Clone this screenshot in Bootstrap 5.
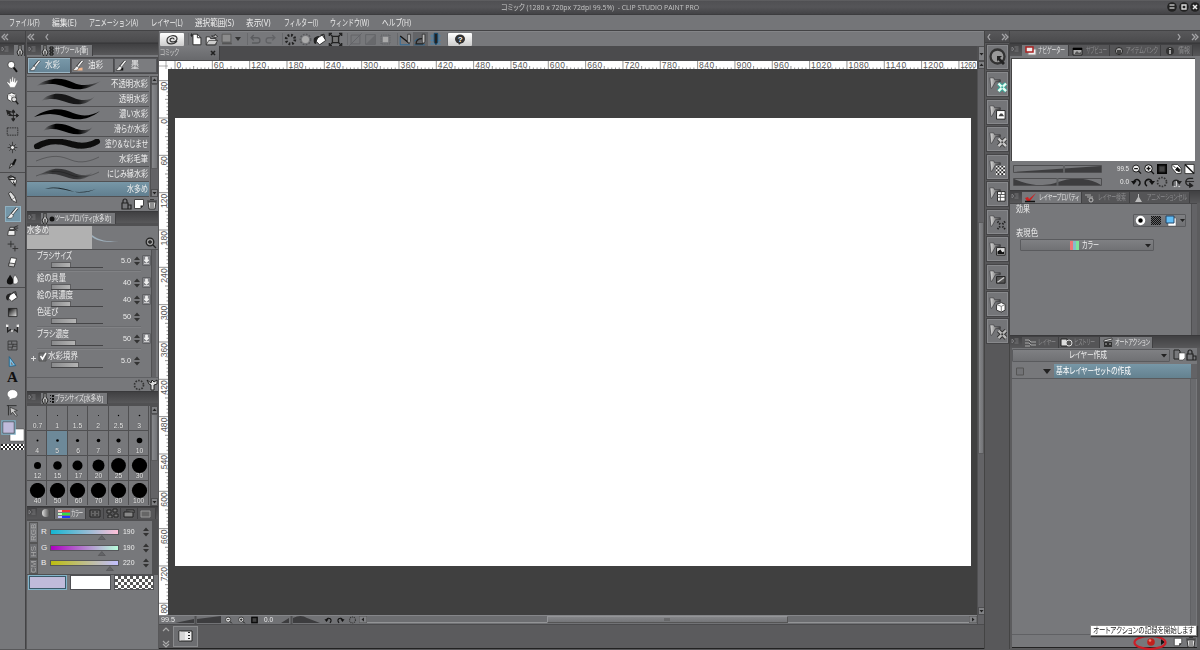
<!DOCTYPE html>
<html lang="ja">
<head>
<meta charset="UTF-8">
<meta name="viewport" content="width=device-width, initial-scale=1.0">
<title>コミック - CLIP STUDIO PAINT PRO</title>
<link href="https://cdn.jsdelivr.net/npm/bootstrap@5.3.0/dist/css/bootstrap.min.css" rel="stylesheet">
<style>
    :root { --panel: #77787b; --edge: #434345; }
    body { width: 1200px; height: 650px; overflow: hidden; background: #58585a; color: #ededed; line-height: 1;
        font-family: "Liberation Sans", "Noto Sans CJK JP", sans-serif; font-size: 8px; font-feature-settings: "palt"; }
    svg { display: block; flex: none; }
    .ic { width: 15px; height: 15px; }
    .ic12 { width: 12px; height: 12px; }
    .ic10 { width: 10px; height: 10px; }
    [data-w] { display: inline-block; white-space: nowrap; flex: none; }
    .fit-in { display: inline-block; white-space: inherit; transform-origin: 0 50%; }
    .titlebar { height: 15px; background: linear-gradient(#6a6a6c 0, #505053 1px, #555558 50%, #434346); border-bottom: 1px solid #3c3c3e; color: #c4c4c4; position: relative; font-family: "Open Sans", "Noto Sans CJK JP", sans-serif; }
    .win-btns { position: absolute; right: 0; top: 2px; gap: 1.5px; }
    .menubar { height: 16px; background: #747578; border-bottom: 1px solid var(--edge); padding: 0 0 0 9px; gap: 12.6px; font: 9px/1 "Open Sans", "Noto Sans CJK JP", sans-serif; }
    .work { height: 618px; }
    .dock-head { height: 12px; background: linear-gradient(#58585a, #4b4b4d); border-bottom: 1px solid #404042; }
    .chev { width: 8px; height: 8px; }
    .tabs { height: 12px; background: linear-gradient(#404042, #58585a); font-size: 7.5px; border-top: 1px solid #39393b; padding-top: 1px; }
    .tabs > .ptab { height: 11px; background: #555557; border-right: 1px solid #404042; color: #8b8b8d; overflow: hidden; }
    .tabs > .ptab.on { background: var(--panel); color: #e4e4e4; }
    .grip-ic { width: 8px; margin: 0 1px; }
    .tool-col { width: 26px; border-right: 1px solid var(--edge); background: var(--panel); }
    .left-col { width: 131px; margin-left: 1px; background: var(--panel); }
    .center-col { width: 825px; margin-left: 1px; }
    .strip-col { width: 25px; border-left: 1px solid #444; background: #58585a; }
    .right-col { width: 191px; border-left: 1px solid #444; background: #5c5c5e; }
    .tl { height: 16.3px; width: 16px; display: flex; align-items: center; justify-content: center; }
    .tl.on { background: #7496a8; outline: 1px solid #8fb0c0; outline-offset: -1px; }
    .rule { height: 1px; background: #4d4d4f; }
    .sbtn { width: 43.4px; height: 15px; border: 1px solid #55565a; outline: 1px solid #4b4b4d; background: #7b7c7f; font-size: 9px; }
    .sbtn.on { background: linear-gradient(#7898a8, #668496); border-color: #9ab4c2; }
    .brush-row { height: 15px; border-bottom: 1px solid #515153; font-size: 9px; padding: 0 1px 0 6px; }
    .brush-row.on { background: linear-gradient(#7797a7, #617f90); }
    .vbar { width: 8px; background: #636366; border-left: 1px solid #505052; }
    .arrow-box { width: 7px; height: 8px; background: #808184; border: 1px solid #4f4f51; }
    .arrow-box svg { width: 5px; height: 6px; }
    .thumb { background: linear-gradient(90deg, #87888b, #737477); border: 1px solid #5b5b5d; }
    .prop { height: 17px; padding-left: 10px; }
    .prop .lab { height: 10px; font-size: 9px; }
    .prop .trk { width: 52px; height: 6px; margin-left: 14px; border-bottom: 1px solid #454547; }
    .prop .trk div { height: 5px; background: linear-gradient(90deg, #8a8b8d, #b4b4b4); border: 1px solid #5d5d5f; border-bottom: 0; }
    .prop .val { width: 28px; text-align: right; padding-top: 5px; }
    .down-btn { width: 9px; height: 11px; border: 1px solid #5f6063; border-radius: 1px; background: #85868a; }
    .grp { border-top: 1px solid #6b6c6f; border-bottom: 1px solid #818285; height: 2px; margin: 1px 10px 2px 10px; }
    .sizes { display: grid; grid-template-columns: repeat(6, 20.4px); grid-auto-rows: 25px; height: 99px; overflow: hidden; }
    .sizes > div { border-right: 1px solid #505052; border-bottom: 1px solid #505052; height: 25px; position: relative; display: flex; justify-content: center; padding: 2px 0 0 1px; font-size: 8px; }
    .sizes > div.on { background: #6d8999; }
    .sizes .num { position: absolute; bottom: 0; transform: scaleX(.85); text-shadow: 0 0 1px #333; }
    .rgb-tabs { width: 9px; color: #aaa; font-size: 8px; }
    .rgb-tabs div { writing-mode: vertical-rl; transform: rotate(180deg); border: 1px solid #555; width: 9px; background: #6b6c6f; text-align: center; overflow: hidden; }
    .grad { width: 69px; height: 6px; border: 1px solid #56575a; }
    .g-r { background: linear-gradient(90deg, #14b6d2, #ffc0d8); }
    .g-g { background: linear-gradient(90deg, #ae00c0, #b8ffdc); }
    .g-b { background: linear-gradient(90deg, #bdbd10, #c2bfff); }
    .sw { height: 15px; border: 1px solid #4f5054; }
    .checker { background: repeating-conic-gradient(#555 0 25%, #fff 0 50%) 0 0 / 6px 6px; }
    .cmd { height: 15px; background: #77787b; border-top: 1px solid #838487; padding-left: 1px; }
    .cmd .whitebox { width: 24px; height: 13px; background: linear-gradient(#fff, #ccc); border-radius: 1px; }
    .cmd .gap5 { width: 5px; height: 12px; border-right: 1px solid #68696c; }
    .docbar { height: 15px; background: #4b4b4d; }
    .doc-tab { width: 61px; height: 14px; background: linear-gradient(#7a7b7e, #68696c); color: #ccc; font-size: 8px; padding: 0 3px 0 1px; border-right: 1px solid #3f3f41; }
    .canvas-bg { width: 809px; height: 546px; background: #404040; padding: 49px 0 0 6.5px; }
    .paper { width: 796px; height: 448px; background: #fff; }
    .ruler { background: #fff; overflow: hidden; }
    .ruler text { font: 8.5px "Liberation Sans"; fill: #555; }
    .hbar { height: 9px; background: #717275; font-size: 8px; border-top: 1px solid #858689; }
    .hbar .lite { background: #6d6e71; border-bottom: 1px solid #939496; height: 7px; }
    .foot { height: 25px; background: #5b5b5d; border-top: 1px solid #4c4c4e; border-bottom: 1px solid #222; }
    .foot-btn { width: 25px; height: 21px; border: 1px solid #8a8b8d; background: #6d6e71; }
    .qbtn { width: 21px; height: 24px; background: #747578; border: 1px solid #88898c; outline: 1px solid #454547; margin: 0 auto 3.45px; }
    .nav-view { width: 184px; height: 103px; background: #fff; border: 1px solid #444; border-width: 1px 0 0 1px; }
    .combo { border: 1px solid #5a5b5e; background: linear-gradient(#7f8083, #707174); border-radius: 1px; font-size: 9px; }
    .act-row { height: 15px; border-bottom: 1px solid #5a5b5e; }
    .act-name { width: 137px; height: 14px; background: linear-gradient(#7797a7, #64818f); font-size: 9px; padding-left: 2px; color: #fff; }
    .hint { position: absolute; left: 1090px; top: 625px; width: 107px; height: 11px; background: #fff; border: 1px solid #888; color: #222; font-size: 8.5px; padding-left: 2px; z-index: 4; box-shadow: 1px 1px 1px #333; }
    .ring { position: absolute; left: 1133px; top: 634px; z-index: 3; }
</style>
</head>
<body>
<svg width="0" height="0" class="position-absolute">
    <defs>
        <pattern id="chk" width="4" height="4" patternUnits="userSpaceOnUse"><path fill="#fff" d="M0 0h4v4H0z"/><path fill="#222" d="M0 0h2v2H0zM2 2h2v2H2z"/></pattern>
        <pattern id="dots" width="2" height="2" patternUnits="userSpaceOnUse"><path fill="#77787b" d="M0 0h2v2H0z"/><path fill="#111" d="M0 0h1.2v1.2H0zM1 1h1v1H1z"/></pattern>
        <linearGradient id="metal"><stop stop-color="#ddd"/><stop offset="1" stop-color="#444"/></linearGradient>
        <linearGradient id="stroke"><stop stop-opacity="0"/><stop offset=".25"/><stop offset=".7"/><stop offset="1" stop-opacity=".1"/></linearGradient>
        <filter id="soft" x="-10%" y="-30%" width="120%" height="160%"><feGaussianBlur stdDeviation=".7"/></filter>
    </defs>
    <symbol id="dbl-l" viewBox="0 0 8 8"><path d="M4 1L1 4l3 3M7 1L4 4l3 3" fill="none" stroke="#a5a5a7" stroke-width="1.3"/></symbol>
    <symbol id="dbl-r" viewBox="0 0 8 8"><path d="M1 1l3 3-3 3M4 1l3 3-3 3" fill="none" stroke="#a5a5a7" stroke-width="1.3"/></symbol>
    <symbol id="one-l" viewBox="0 0 8 8"><path d="M5 1L3 4l2 3" fill="none" stroke="#a5a5a7" stroke-width="1.3"/></symbol>
    <symbol id="one-r" viewBox="0 0 8 8"><path d="M3 1l2 3-2 3" fill="none" stroke="#a5a5a7" stroke-width="1.3"/></symbol>
    <symbol id="grip" viewBox="0 0 8 8"><path d="M1 1.500l2 2-2 2zM3.500 1.500h4M4.500 3.500h3M3.500 5.500h4" stroke="#8a8a8c" stroke-width=".7" fill="none"/></symbol>
    <symbol id="pen-tab" viewBox="0 0 8 12"><path d="M3 0h2v4l2 3-2 5H3L1 7l2-3z" fill="#bbb" stroke="#222"/><path d="M4 6v5" stroke="#111"/></symbol>
    <symbol id="up" viewBox="0 0 5 6"><path d="M.5 4h4L2.500 1.500z" fill="#222"/></symbol>
    <symbol id="dn" viewBox="0 0 5 6"><path d="M.5 2h4L2.500 4.500z" fill="#222"/></symbol>
    <symbol id="spin" viewBox="0 0 6 10"><path d="M0 4h6L3 .5zM0 6h6L3 9.500z" fill="#333"/></symbol>
    <symbol id="magnify" viewBox="0 0 16 16"><circle cx="6.500" cy="6" r="4.300" fill="#fff" stroke="#333"/><path d="M9.500 9.500l4 5" stroke="#111" stroke-width="2.400"/></symbol>
    <symbol id="hand" viewBox="0 0 16 16"><path d="M5 14C4 11 1 9 1 7.500l1-.5 2.500 2V3.500L6 3l.7 4L7.500 1H9l.2 6 1.300-5 1.300.5L11.300 8 13.500 5l1.200.8C13 9 12.500 12 10.500 14z" fill="#fff" stroke="#555" stroke-width=".5"/></symbol>
    <symbol id="objsel" viewBox="0 0 16 16"><path d="M2 3l5-2 5 2v6l-5 3-5-3z" fill="#fff" stroke="#333"/><path d="M2 3l5 2 5-2M7 5v7" stroke="#aaa" fill="none"/><circle cx="10" cy="9" r="3" fill="#ddd" stroke="#222"/><path d="M12 11l3 4" stroke="#222" stroke-width="2"/></symbol>
    <symbol id="move" viewBox="0 0 16 16"><path d="M9 2v12M3 8h12M9 1L7 4h4zM9 15l-2-3h4zM15.500 8L13 6v4z" fill="#222" stroke="#222" stroke-width="1.200"/><path d="M0 1l7 2-2 2 3 3-2 1-3-3-1 2z" fill="#222"/></symbol>
    <symbol id="marquee" viewBox="0 0 16 16"><path d="M1.500 3.500h13v9h-13z" fill="none" stroke="#222" stroke-dasharray="2 1"/></symbol>
    <symbol id="wand" viewBox="0 0 16 16"><path d="M8 1v14M2 8h12M4 4l8 8M12 4l-8 8" stroke="#333"/><circle cx="8" cy="8" r="2.500" fill="#eee" stroke="#222"/></symbol>
    <symbol id="dropper" viewBox="0 0 16 16"><path d="M4 14l2-6 3 2z" fill="#bbb" stroke="#222"/><path d="M7 9l4-7 2 1-3 7z" fill="#111"/></symbol>
    <symbol id="nib" viewBox="0 0 16 16"><path d="M3 4l6-2 4 5-2 7-5-6z" fill="#eee" stroke="#222"/><path d="M2 3l4-2 6 3M3 5l8 1M9 8l2 5" stroke="#222" fill="none" stroke-width="1.500"/></symbol>
    <symbol id="pencil" viewBox="0 0 16 16"><path d="M3 3l3-2 5 6 2 7-6-3z" fill="#ddd" stroke="#222"/><path d="M7 11l4-3 2 6z" fill="#fff" stroke="#222" stroke-width=".6"/></symbol>
    <symbol id="brush" viewBox="0 0 16 16"><path d="M14 1L7 9" stroke="#222" stroke-width="3.500"/><path d="M14 1L7.500 9" stroke="#f4f4f4" stroke-width="2"/><path d="M7 8c-3 0-2 4-6 5 3 2 8 1 8-3z" fill="#eee" stroke="#222" stroke-width=".7"/></symbol>
    <symbol id="air" viewBox="0 0 16 16"><path d="M3 8h8v6H2z" fill="#eee" stroke="#333"/><path d="M4 7l1-3h5v3zM10 4l5-2M10 5h5M10 6l4 2" fill="#ccc" stroke="#222"/></symbol>
    <symbol id="sparkle" viewBox="0 0 16 16"><path d="M6 1v8M2 5h8M11 7v7M8 10.500h7" stroke="#333" stroke-width="1.200"/></symbol>
    <symbol id="eraser" viewBox="0 0 16 16"><path d="M6 2l7 1-3 10-7-1z" fill="#fff" stroke="#333"/><path d="M4 8.500l7 1-1 4-7-1z" fill="#ccc" stroke="#333"/></symbol>
    <symbol id="blend" viewBox="0 0 16 16"><path d="M5 2c3 4 4 6 4 8a4 4 0 0 1-8 0c0-2 2-4 4-8z" fill="#111"/><path d="M11 2c3 4 4 6 4 8a4 4 0 0 1-6 3V6z" fill="#f4f4f4" stroke="#333" stroke-width=".6"/></symbol>
    <symbol id="bucket" viewBox="0 0 16 16"><path d="M5 6l5-3 4 6-7 5-4-4z" fill="#fff" stroke="#222"/><path d="M0 9c0-3 3-5 7-5L4 7l-1 6C1 13 0 11 0 9z" fill="#222"/><path d="M8 3l4-1 1 5" fill="none" stroke="#222"/></symbol>
    <symbol id="gradient" viewBox="0 0 16 16"><linearGradient id="gg" x2="1" y2="1"><stop stop-color="#000"/><stop offset="1" stop-color="#eee"/></linearGradient><path d="M3 3h10.500v10H3z" fill="url(#gg)" stroke="#222"/></symbol>
    <symbol id="contour" viewBox="0 0 16 16"><path d="M2 3v9l4-3M14 3v9l-4-3M5 10q3 3 6 0" stroke="#222" fill="none" stroke-width="1.500"/><path d="M0 3h3v3H0zM13 3h3v3h-3zM6 10h3v2H6z" fill="#eee"/></symbol>
    <symbol id="frame" viewBox="0 0 16 16"><path d="M2.500 2.500h11v11h-11zM2.500 6.500h11M7 3v3M9 6l-2 7M3 10h5M8 9h5" stroke="#333" fill="none"/></symbol>
    <symbol id="figure" viewBox="0 0 16 16"><path d="M4 2l8 11-8 1z" fill="#7fc2e8" stroke="#185a82"/><path d="M6 8v4h3z" fill="#77787b"/></symbol>
    <symbol id="balloon" viewBox="0 0 16 16"><ellipse cx="8" cy="7.500" rx="6.500" ry="5.500" fill="#fff" stroke="#444" stroke-width=".5"/><path d="M5 11l-1 3 5-2z" fill="#fff"/></symbol>
    <symbol id="fixline" viewBox="0 0 16 16"><path d="M1 2h12M3 2v12" stroke="#222"/><path d="M5 4l9 4-4 1 4 5-2 1-4-5-2 3z" stroke="#222" fill="#ccc" stroke-width=".8"/></symbol>
    <symbol id="lock" viewBox="0 0 12 12"><path d="M2 5h6v6H2zM3 5V3a2 2 0 0 1 4 0v2M8 7h3v4H8" fill="none" stroke="#222" stroke-width="1.200"/></symbol>
    <symbol id="newdoc" viewBox="0 0 12 12"><path d="M1.500 1.500h9v6l-3 3h-6z" fill="#fff" stroke="#444"/><path d="M10.500 7.500h-3v3z" fill="#222"/></symbol>
    <symbol id="trash" viewBox="0 0 12 12"><path d="M2 4h8l-1 7H3z" fill="#ddd" stroke="#333"/><path d="M1 3h10M4 1.500h4M5 5v5M7 5v5" stroke="#333" stroke-width=".9"/></symbol>
    <symbol id="spinner" viewBox="0 0 12 12"><circle cx="6" cy="6" r="4.500" fill="none" stroke="#333" stroke-width="1.700" stroke-dasharray="1.600 1.230"/></symbol>
    <symbol id="wrench" viewBox="0 0 12 12"><path d="M1 1l2 4 2 1v5h3V6l3-1V1L8 3 6 1 5 4z" fill="#ddd" stroke="#222"/></symbol>
    <symbol id="zout" viewBox="0 0 12 12"><circle cx="5.500" cy="5.500" r="3.800" fill="#eee" stroke="#111"/><path d="M3.500 5.500h4M8 8l3 3" stroke="#111" stroke-width="1.300"/></symbol>
    <symbol id="zin" viewBox="0 0 12 12"><circle cx="5.500" cy="5.500" r="3.800" fill="#eee" stroke="#111"/><path d="M3.500 5.500h4M5.500 3.500v4M8 8l3 3" stroke="#111" stroke-width="1.300"/></symbol>
    <symbol id="fit" viewBox="0 0 12 12"><path d="M1 1h10v10H1z" fill="#050505"/><path d="M3 3h6v6H3z" fill="#444" stroke="#222"/></symbol>
    <symbol id="rotl" viewBox="0 0 12 12"><path d="M3 6a3.500 3.500 0 1 1 5 4" fill="none" stroke="#111" stroke-width="1.600"/><path d="M0 5h6L3 9z" fill="#111"/></symbol>
    <symbol id="rotr" viewBox="0 0 12 12"><path d="M9 6a3.500 3.500 0 1 0-5 4" fill="none" stroke="#111" stroke-width="1.600"/><path d="M12 5H6l3 4z" fill="#111"/></symbol>
    <symbol id="flipa" viewBox="0 0 12 12"><path d="M1 1h6l4 4v6H6L1 5z" fill="#fff" stroke="#333"/><path d="M2 2l3 3M5 7l2-3 3 3-1 2z" fill="#111" stroke="#111"/></symbol>
    <symbol id="flipb" viewBox="0 0 12 12"><path d="M1 1h10v10H1z" fill="#fff" stroke="#333"/><path d="M1 1l10 10" stroke="#111" stroke-width="1.500"/></symbol>
    <symbol id="fliph" viewBox="0 0 12 12"><path d="M2 10V6a4 4 0 0 1 7 0" fill="none" stroke="#222" stroke-width="1.500"/><path d="M6 5h6L9 9z" fill="#222"/><path d="M6 5v6M3 11h2M8 11h2" stroke="#ddd"/></symbol>
    <symbol id="flipv" viewBox="0 0 12 12"><path d="M10 2H6a3.500 3.500 0 0 0 0 8h1" fill="none" stroke="#222" stroke-width="1.500"/><path d="M6 7v5l4-2zM2 5.500h9" fill="#222" stroke="#222"/></symbol>
    <symbol id="folder" viewBox="0 0 21 24"><path d="M2 5h4l1 2h6v2H8l-4 7H3z" fill="url(#metal)" stroke="#3a3a3c" stroke-width=".7"/></symbol>
</svg>

<div class="titlebar d-flex justify-content-center align-items-center">
    <span data-w="198" style="white-space: pre">コミック (1280 x 720px 72dpi 99.5%)  - CLIP STUDIO PAINT PRO</span>
    <div class="win-btns d-flex">
        <svg class="ic10" viewBox="0 0 10 10"><circle cx="5" cy="5" r="4.800" fill="#222"/><path d="M2.500 3h5M2.500 6h5" stroke="#bbb" stroke-width="1.300"/></svg>
        <svg class="ic10" viewBox="0 0 10 10"><circle cx="5" cy="5" r="4.800" fill="#222"/><path d="M3 3h4v4H3z" fill="none" stroke="#ddd" stroke-width="1.300"/></svg>
        <svg class="ic10" viewBox="0 0 10 10"><circle cx="5" cy="5" r="4.800" fill="#222"/><path d="M3 3l4 4M7 3L3 7" stroke="#eee" stroke-width="1.500"/></svg>
    </div>
</div>
<nav class="menubar d-flex align-items-center">
    <span data-w="30.500">ファイル(F)</span><span data-w="24.500">編集(E)</span><span data-w="49">アニメーション(A)</span><span data-w="31.500">レイヤー(L)</span><span data-w="39">選択範囲(S)</span><span data-w="24.500">表示(V)</span><span data-w="34">フィルター(I)</span><span data-w="39">ウィンドウ(W)</span><span data-w="29">ヘルプ(H)</span>
</nav>

<div class="work d-flex">
    <!-- ツール -->
    <aside class="tool-col d-flex flex-column">
        <div class="dock-head d-flex align-items-center"><svg class="chev" style="margin-left:1px"><use href="#dbl-l"/></svg></div>
        <div class="tabs d-flex"><svg class="grip-ic" height="9"><use href="#grip"/></svg><div class="ptab on ms-1" style="padding:0 2px"><svg width="8" height="12"><use href="#pen-tab"/></svg></div></div>
        <div id="tools" class="d-flex flex-column align-items-center" style="padding-top:3px"></div>
        <div style="height:36px">
            <svg width="25" height="36"><path d="M10 10h14v12H10z" fill="#fff" stroke="#444" stroke-width=".5"/><path d="M2 2h13v13H2z" fill="#c0bbdb" stroke="#7fb0c6" stroke-width="1.500"/><path d="M2.800 2.800h11.400v11.400H2.800z" fill="none" stroke="#333" stroke-width=".6"/><g transform="translate(1 25)"><path d="M0 0h23v6H0z" fill="url(#chk)"/></g></svg>
        </div>
    </aside>

    <!-- ブラシ関連パレット -->
    <aside class="left-col">
        <div class="dock-head d-flex align-items-center gap-2"><svg class="chev"><use href="#dbl-l"/></svg><svg class="chev"><use href="#one-l"/></svg></div>
        <div class="tabs d-flex"><svg class="grip-ic" height="9"><use href="#grip"/></svg>
            <div class="ptab on ms-1 d-flex align-items-center pe-1"><svg width="8" height="12"><use href="#pen-tab"/></svg><svg width="6" height="10"><path d="M1 1h3v2H1zM1 4h3v2H1zM1 7h3v2H1z" fill="#777" stroke="#111"/></svg><span data-w="33">サブツール[筆]</span></div>
        </div>
        <div class="d-flex justify-content-between" style="padding:3px 1px;height:21px">
            <div class="sbtn on d-flex align-items-center gap-1"><svg class="ic12"><use href="#brush"/></svg><span data-w="15">水彩</span></div>
            <div class="sbtn d-flex align-items-center gap-1"><svg class="ic12" viewBox="0 0 16 16"><path d="M2 12l12-2v4H2z" fill="#f0b48c"/><use href="#brush" width="16" height="16"/></svg><span data-w="15">油彩</span></div>
            <div class="sbtn d-flex align-items-center gap-1"><svg class="ic12" viewBox="0 0 16 16"><path d="M2 12l9-2v4H2z" fill="#111"/><use href="#brush" width="16" height="16"/></svg><span data-w="8">墨</span></div>
        </div>
        <div class="d-flex">
            <div id="brushes" style="width:122px;border-top:1px solid #515153"></div>
            <div class="vbar d-flex flex-column ms-auto"><div class="arrow-box"><svg><use href="#up"/></svg></div><div class="thumb" style="height:85px"></div><div class="arrow-box mt-auto"><svg><use href="#dn"/></svg></div></div>
        </div>
        <div class="d-flex justify-content-end align-items-center" style="height:14px;gap:1px"><svg class="ic12"><use href="#lock"/></svg><svg class="ic12"><use href="#newdoc"/></svg><svg class="ic12"><use href="#trash"/></svg></div>

        <div class="tabs d-flex"><svg class="grip-ic" height="9"><use href="#grip"/></svg>
            <div class="ptab on ms-1 d-flex align-items-center pe-1"><svg width="8" height="12"><use href="#pen-tab"/></svg><svg width="6" height="8"><circle cx="3" cy="4" r="2.500" fill="#111"/></svg><span data-w="56">ツールプロパティ[水多め]</span></div>
        </div>
        <div class="d-flex" style="height:27px;border:1px solid #505052;border-width:3px 0 1px;background:#77787b">
            <div style="width:65px;background:#b1b1b1"><span data-w="22" style="font-size:9px;background:#8b8b8d">水多め</span></div>
            <svg width="66" height="23"><path d="M0 9c8 6 14 6 27 7-12 0-20 0-27-5z" fill="#9fb0bc"/><circle cx="58" cy="16" r="3.800" fill="#999" stroke="#222" stroke-width="1.300"/><path d="M61 19l3 3M56 16h4M58 14v4" stroke="#222" stroke-width="1.300"/></svg>
        </div>
        <div class="d-flex" style="height:127px"><div id="props" class="flex-grow-1" style="padding-top:2px"></div><div class="vbar" style="width:6px;margin-right:2px"></div></div>
        <div class="d-flex justify-content-end align-items-center" style="height:14px;gap:1px;border-top:1px solid #606164"><svg class="ic12"><use href="#spinner"/></svg><svg class="ic12"><use href="#wrench"/></svg></div>

        <div class="tabs d-flex"><svg class="grip-ic" height="9"><use href="#grip"/></svg>
            <div class="ptab on ms-1 d-flex align-items-center pe-1"><svg width="8" height="12"><use href="#pen-tab"/></svg><svg width="6" height="10"><path d="M1 1h1v1H1zM3 1h2v2H3zM1 4h1v1H1zM3 4h2v2H3zM1 7h1v1H1zM3 7h2v2H3z" fill="#111"/></svg><span data-w="48">ブラシサイズ[水多め]</span></div>
        </div>
        <div class="d-flex" style="height:103px;border-top:3px solid #505052">
            <div id="sizes" class="sizes"></div>
            <div class="vbar d-flex flex-column ms-auto"><div class="arrow-box"><svg><use href="#up"/></svg></div><div class="thumb" style="height:47px"></div><div class="arrow-box mt-auto"><svg><use href="#dn"/></svg></div></div>
        </div>
        <div class="tabs d-flex" style="height:13px"><svg class="grip-ic" height="9"><use href="#grip"/></svg>
            <div class="ptab" style="width:18px"><svg width="17" height="10"><circle cx="9" cy="5" r="4" fill="url(#metal)"/></svg></div>
            <div class="ptab on d-flex align-items-center" style="width:31px"><svg width="16" height="10"><path d="M3 1h12v2H3z" fill="#e33"/><path d="M3 4h12v2H3z" fill="#3d4"/><path d="M3 7h12v2H3z" fill="#23f"/><path d="M3 1h4v2H3zM3 4h4v2H3zM3 7h4v2H3z" fill="#fff" opacity=".7"/></svg><span data-w="12">カラー</span></div>
            <div class="ptab" style="width:18px"><svg width="17" height="10"><path d="M4 2h10v7H4zM6 4h2M10 4h2M6 7h2M10 7h2" fill="#666" stroke="#222"/></svg></div>
            <div class="ptab" style="width:17px"><svg width="17" height="10"><path d="M3 2h4v3H3zM9 1h4v3H9zM4 7h4v3H4zM10 6h4v3h-4z" fill="#777" stroke="#222"/></svg></div>
            <div class="ptab" style="width:17px"><svg width="17" height="10"><path d="M3 4h9v5H3zM5 2h8v3" fill="#888" stroke="#222"/></svg></div>
            <div class="ptab" style="width:18px"><svg width="16" height="10"><path d="M3 3h9v6H3z" fill="#666" stroke="#999"/></svg></div>
        </div>
        <div class="d-flex" style="height:56px;border:1px solid #505052;border-width:2px 6px 1px 0;padding-left:2px">
            <div class="rgb-tabs" style="padding-top:1px"><div style="height:21px;background:#77787b">RGB</div><div style="height:16px">HS</div><div style="height:15px">CM</div></div>
            <div id="channels" class="flex-grow-1" style="padding-top:2px"></div>
        </div>
        <div class="d-flex" style="gap:3px"><div class="sw" style="width:39px;background:#c0bbdb;border:1px solid #83b4ca;outline:1px solid #3a5a6a;outline-offset:-2px;margin-left:1px"></div><div class="sw bg-white" style="width:41px"></div><div class="sw checker" style="width:40px"></div></div>
    </aside>

    <!-- キャンバス -->
    <main class="center-col d-flex flex-column">
        <div class="cmd d-flex align-items-center" id="cmdbar"></div>
        <div class="d-flex" style="height:578px">
            <div style="width:818px">
                <div class="docbar"><div class="doc-tab d-flex align-items-center justify-content-between"><span data-w="19">コミック</span><svg width="6" height="6"><path d="M1 1l4 4M5 1L1 5" stroke="#222" stroke-width="1.600"/></svg></div></div>
                <svg id="hruler" class="ruler" width="818" height="8"></svg>
                <div class="d-flex"><svg id="vruler" class="ruler" width="9" height="546"></svg><div class="canvas-bg"><div class="paper"></div></div></div>
                <div class="hbar d-flex align-items-start">
                    <span data-w="14" style="margin-left:2px">99.5</span>
                    <svg width="46" height="8"><path d="M0 7L19 3v4zM22 7V3L46 0v7z" fill="#3d3d3f"/><path d="M20.500 0v8" stroke="#505052" stroke-width="2"/></svg>
                    <svg width="9" height="8" style="margin-left:3px"><use href="#zout"/></svg><svg class="mx-1" width="9" height="8"><use href="#zin"/></svg><svg width="9" height="8"><use href="#fit"/></svg>
                    <span data-w="9" style="margin-left:5px">0.0</span>
                    <svg width="48" height="8"><path d="M8 7L16 2v5zM20 7V2q8-4 14 0l13 5z" fill="#3d3d3f"/><path d="M18.500 0v8" stroke="#505052" stroke-width="2"/></svg>
                    <svg style="margin-left:3px" width="9" height="8"><use href="#rotl"/></svg><svg style="margin:0 3px" width="9" height="8"><use href="#rotr"/></svg><svg width="9" height="8"><use href="#spinner"/></svg>
                    <svg width="8" height="7" style="margin-left:2px"><path d="M0 0h8v7H0z" fill="#808184" stroke="#555"/><path d="M5 1.500v4L2.500 3.500z" fill="#222"/></svg>
                    <div class="lite" style="flex:1"></div>
                    <div style="width:241px;height:7px;background:linear-gradient(#858689,#747578);border:1px solid #949598;border-color:#949598 #555 #555 #949598"><svg width="239" height="5"><path d="M117 1v3M119 1v3M121 1v3" stroke="#555"/></svg></div>
                    <div class="lite" style="width:181px"></div>
                    <svg width="8" height="7"><path d="M0 0h8v7H0z" fill="#808184" stroke="#555"/><path d="M3 1.500v4l2.500-2z" fill="#222"/></svg>
                </div>
            </div>
            <div class="vbar d-flex flex-column" style="width:7px">
                <div class="arrow-box" style="height:15px;padding-top:4px"><svg><use href="#dn"/></svg></div>
                <div class="arrow-box"><svg><use href="#up"/></svg></div>
                <div class="thumb" style="height:232px;margin-top:153px"></div>
                <div class="arrow-box" style="margin-top:auto;margin-bottom:9px"><svg><use href="#dn"/></svg></div>
            </div>
        </div>
        <div class="foot d-flex align-items-center">
            <svg width="14" height="22"><path d="M4 5l3-3 3 3M4 15l3 3 3-3M4 18l3 3 3-3" fill="none" stroke="#aaa" stroke-width="1.200"/></svg>
            <div class="foot-btn"><svg width="23" height="19"><path d="M5 4h13v10H5z" fill="#eee" stroke="#222"/><path d="M6 4v10M8 5v8M10 5v8" stroke="#bbb"/><path d="M15 5v1M15 8v1M15 11v1" stroke="#222" stroke-width="2"/></svg></div>
        </div>
    </main>

    <!-- クイックアクセス / 素材 -->
    <aside class="strip-col">
        <div class="dock-head d-flex align-items-center justify-content-between"><svg class="chev"><use href="#one-l"/></svg><svg class="chev"><use href="#dbl-r"/></svg></div>
        <div id="materials" style="padding-top:2px"></div>
    </aside>

    <!-- ナビゲーターほか -->
    <aside class="right-col">
        <div class="dock-head d-flex align-items-center justify-content-end gap-2" style="padding-right:1px"><svg class="chev"><use href="#one-r"/></svg><svg class="chev"><use href="#dbl-r"/></svg></div>
        <div class="tabs d-flex" style="height:13px"><svg class="grip-ic" height="9"><use href="#grip"/></svg>
            <div class="ptab on d-flex align-items-center" style="width:47px;margin-left:2px"><svg width="16" height="11"><path d="M6 4h8v6H6z" fill="#eee" stroke="#888"/><path d="M4 2h7v5H4z" fill="#eee" stroke="#a22" stroke-width="1.500"/></svg><span data-w="27">ナビゲーター</span></div>
            <div class="ptab d-flex align-items-center" style="width:41px"><svg width="17" height="10"><path d="M4 2h9v7H4z" fill="#aaa" stroke="#222"/><path d="M4 2h9v2H4z"/><path d="M6 7l2-2 2 2 2-1v2H6z" fill="#555"/></svg><span data-w="21">サブビュー</span></div>
            <div class="ptab d-flex align-items-center" style="width:51px"><svg width="16" height="10"><circle cx="9" cy="5" r="3.500" fill="#aaa" stroke="#222"/><path d="M7 4h4v4H7z" fill="#444"/></svg><span data-w="32">アイテムバンク</span></div>
            <div class="ptab d-flex align-items-center" style="width:32px"><svg width="17" height="10"><circle cx="9" cy="5" r="4" fill="#333"/><path d="M9 2v1M9 4v4" stroke="#ccc" stroke-width="1.500"/></svg><span data-w="12">情報</span></div>
        </div>
        <div style="height:134px;background:#77787b;padding:2px 5px 0 1px">
            <div class="nav-view"></div>
            <div class="d-flex align-items-center" style="height:13px;padding:2px 0 0 2px">
                <svg width="89" height="8"><path d="M.5.5h88v7H.5z" fill="#77787b" stroke="#4e4e50"/><path d="M1 7L88 1v6z" fill="#3d3d3f"/><path d="M51 0v8" stroke="#5f6062" stroke-width="2"/></svg>
                <span data-w="12" style="margin-left:15px">99.5</span>
                <svg class="ic12" style="width:11px;margin-left:2px"><use href="#zout"/></svg><svg class="ic12" style="margin-left:1px"><use href="#zin"/></svg><svg class="ic12" style="margin-left:1px"><use href="#fit"/></svg><svg class="ic12" style="width:11px;margin-left:3px"><use href="#flipa"/></svg><svg class="ic12" style="width:11px;margin-left:2px"><use href="#flipb"/></svg>
            </div>
            <div class="d-flex align-items-center" style="height:13px;padding:2px 0 0 2px">
                <svg width="89" height="8"><path d="M.5.5h88v7H.5z" fill="#77787b" stroke="#4e4e50"/><path d="M1 1q12 5 22 6H1zM23 7C43 8 47 1 60 1h10q10 1 18 6z" fill="#3d3d3f"/><path d="M44.500 0v8" stroke="#5f6062" stroke-width="2"/></svg>
                <span data-w="9" style="margin-left:18px">0.0</span>
                <svg class="ic12" style="width:11px;margin-left:2px"><use href="#rotl"/></svg><svg class="ic12" style="margin-left:1px"><use href="#rotr"/></svg><svg class="ic12" style="margin-left:1px"><use href="#spinner"/></svg><svg class="ic12" style="width:11px;margin-left:3px"><use href="#fliph"/></svg><svg class="ic12" style="width:11px;margin-left:2px"><use href="#flipv"/></svg>
            </div>
        </div>
        <div class="tabs d-flex" style="height:13px"><svg class="grip-ic" height="9"><use href="#grip"/></svg>
            <div class="ptab on d-flex align-items-center" style="width:60px;margin-left:2px"><svg width="17" height="11"><path d="M3 6l3-1 1 2 7-6-6 8H5z" fill="#c22"/><path d="M3 9.500h10" stroke="#111" stroke-width="1.500"/></svg><span data-w="40">レイヤープロパティ</span></div>
            <div class="ptab d-flex align-items-center" style="width:48px"><svg width="16" height="10"><path d="M3 2h6M5 4h6" stroke="#aaa"/><circle cx="9" cy="7" r="2" fill="none" stroke="#bbb"/></svg><span data-w="28">レイヤー検索</span></div>
            <div class="ptab d-flex align-items-center" style="width:60px"><svg width="17" height="10"><path d="M8 1v3L5 9h7L9 4V1z" fill="#bbb"/></svg><span data-w="40">アニメーションセル</span></div>
        </div>
        <div class="d-flex" style="height:132px;background:#77787b;border-top:1px solid #48484a;margin-right:3px">
            <div class="flex-grow-1" style="padding:1px 0 0 6px;font-size:9px">
                <div data-w="14" style="line-height:9px">効果</div>
                <div class="d-flex justify-content-end" style="padding-right:5px"><div class="combo d-flex align-items-center" style="width:53px;height:13px"><svg width="51" height="11"><circle cx="6.500" cy="5.500" r="3.500" stroke="#fff" stroke-width="2.500"/><path d="M17 1h10v9H17z" fill="url(#dots)"/><path d="M34 3h8v8h-8z" fill="#fff" stroke="#555" stroke-width=".5"/><path d="M32 1h8v7h-8z" fill="#62bdf5" stroke="#246"/><path d="M46 4h5l-2.500 3z" fill="#222"/></svg></div></div>
                <div style="height:13px;padding-top:2px"><span data-w="22">表現色</span></div>
                <div class="combo d-flex align-items-center justify-content-center position-relative" style="width:134px;height:12px;margin:-1px 0 0 4px"><svg width="10" height="9"><path d="M1 0h3v9H1z" fill="#e77"/><path d="M4 0h3v9H4z" fill="#8bc"/><path d="M7 0h3v9H7z" fill="#7ee59a"/></svg><span data-w="17" style="margin-left:3px;margin-right:7px">カラー</span><svg class="position-absolute end-0" width="9" height="5"><path d="M1 1h6L4 4.500z" fill="#222"/></svg></div>
            </div>
            <div class="vbar" style="width:6px"></div>
        </div>
        <div class="tabs d-flex" style="height:13px"><svg class="grip-ic" height="9"><use href="#grip"/></svg>
            <div class="ptab d-flex align-items-center" style="width:37px;margin-left:2px"><svg width="16" height="10"><path d="M3 2h4l2 2h5M3 5h4l2 2h5M3 8h5" stroke="#aaa" fill="none"/></svg><span data-w="18">レイヤー</span></div>
            <div class="ptab d-flex align-items-center" style="width:41px"><svg width="15" height="11"><path d="M2 2h6v7H2z" fill="#ddd" stroke="#222"/><circle cx="10" cy="6" r="3" fill="#555" stroke="#ddd"/></svg><span data-w="21">ヒストリー</span></div>
            <div class="ptab on d-flex align-items-center" style="width:53px"><svg width="15" height="11"><path d="M4 5h8v5H4z" fill="#333"/><path d="M4 3l8-2v2L4 5zM5 6h2v2H5zM9 6h2v2H9z" fill="#ddd" stroke="#222" stroke-width=".7"/></svg><span data-w="35">オートアクション</span></div>
        </div>
        <div style="height:300px;background:#77787b;border-bottom:1px solid #222;margin:0 3px 0 2px">
            <div class="d-flex align-items-center" style="height:14px">
                <div class="combo d-flex align-items-center justify-content-center position-relative" style="width:158px;height:13px;padding-right:6px"><span data-w="38">レイヤー作成</span><svg class="position-absolute end-0" width="9" height="5"><path d="M1 1h6L4 4.500z" fill="#222"/></svg></div>
                <svg class="ic12 ms-auto" viewBox="0 0 12 12"><path d="M1 1h5l1 1v8H1z" fill="none" stroke="#222"/><path d="M6 4h6v5l-2 2H6z" fill="#fff" stroke="#222" stroke-width=".5"/></svg><svg class="ic12"><use href="#lock"/></svg>
            </div>
            <div class="act-row d-flex align-items-center" style="margin-top:2px">
                <svg width="42" height="13"><path d="M4.500 3h7v7h-7z" fill="#727376" stroke="#555"/><path d="M31 4h8l-4 5z" fill="#222"/></svg>
                <div class="act-name d-flex align-items-center"><span data-w="75">基本レイヤーセットの作成</span></div>
                <div class="ms-auto" style="width:6px;height:14px;background:#636366"></div>
            </div>
            <svg width="185" height="256"><path d="M179 0h5v256h-5z" fill="#6a6b6e"/><path d="M178.500 0v256M0 255.500h185" stroke="#606164"/></svg>
            <div class="d-flex align-items-center justify-content-end" style="height:13px">
                <svg width="12" height="12"><circle cx="6" cy="6" r="3.800" fill="#c3201c"/><circle cx="5" cy="4.500" r="1.300" fill="#f08070"/></svg>
                <svg width="12" height="12" style="margin-right:4px"><path d="M4 3v6l4-3z" fill="#111"/></svg>
                <svg class="ic10"><use href="#newdoc"/></svg><svg class="ic12" style="margin-left:2px"><use href="#trash"/></svg>
            </div>
        </div>
    </aside>
</div>
<div class="hint d-flex align-items-center"><span data-w="101">オートアクションの記録を開始します</span></div>
<svg class="ring" width="36" height="16"><ellipse cx="17" cy="8.500" rx="15.500" ry="6.500" fill="none" stroke="#cc1f28" stroke-width="2.200"/></svg>

<script>
    const $ = id => document.getElementById(id);

    // ツール一覧 (- は区切り線)
    const tools = ['magnify', 'hand', 'objsel', 'move', 'marquee', 'wand', 'dropper', '-', 'nib', 'pencil', 'brush', 'air', 'sparkle', 'eraser', 'blend', '-', 'bucket', 'gradient', 'contour', 'frame', 'figure', 'A', 'balloon', 'fixline'];
    $('tools').innerHTML = tools.map(t => {
        if (t === '-') return '<div class="rule w-100"></div>';
        if (t === 'A') return '<div class="tl" style="font:bold 15px Liberation Serif;color:#111">A</div>';
        return `<div class="tl ${t === 'brush' ? 'on' : ''}"><svg width="13" height="13"><use href="#${t}"/></svg></div>`;
    }).join('');

    // ブラシ: 名前, 幅, ストローク
    const thin = (w, o) => `<path d="M3 9C20 2 28 4 38 8S58 9 66 5" fill="none" stroke="#111" stroke-width="${w}" opacity="${o}"/>`;
    const wave = (a, b, o) => `<path filter="url(#soft)" fill="url(#stroke)" d="M${a} 9C18 -1 30 1 40 5.500S58 8 ${b} 4C56 12 46 14 36 11S20 5 ${a} 9z" opacity="${o}"/>`;
    const brushes = [
        ['不透明水彩', 37, wave(3, 68, 1)], ['透明水彩', 29, wave(8, 62, .8)],
        ['濃い水彩', 29, '<path d="M1 10C18 -1 30 2 40 6S58 9 67 4C57 12 46 14 36 11S18 4 1 10z"/>'], ['滑らか水彩', 34, wave(10, 60, 1)],
        ['塗り＆なじませ', 43, '<path filter="url(#soft)" d="M4 9.500C20 1 30 5 40 7.500S58 8 64 4.500" fill="none" stroke="#0c0c0c" stroke-width="6" stroke-linecap="round"/>'],
        ['水彩毛筆', 29, thin(.5, .6)], ['にじみ縁水彩', 41, thin(.8, .4) + wave(6, 60, .55)], ['水多め', 21, '<path d="M12 7c10-3 18-1 27 2s18 1 24-2c-8 3-18 4-26 2S22 5 12 7z" opacity=".7"/>']
    ];
    $('brushes').innerHTML = brushes.map(([name, w, d], i) =>
        `<div class="brush-row d-flex align-items-center justify-content-between ${i === 7 ? 'on' : ''}"><svg width="70" height="14">${d}</svg><span data-w="${w}">${name}</span></div>`).join('');

    const props = [
        ['ブラシサイズ', 35, '5.0', 20, 1, 1], ['絵の具量', 29, '40', 20, 1, 0], ['絵の具濃度', 36, '40', 20, 1, 0],
        ['色延び', 21, '50', 26, 0, 1], ['ブラシ濃度', 32, '50', 25, 1, 1], ['水彩境界', 30, '5.0', 28, 0, 0]
    ];
    $('props').innerHTML = props.map(([name, w, val, fill, btn, sep], i) => {
        const check = i === 5 ? '<svg width="17" height="10" style="margin-left:-6px"><path d="M0 6.500h5M2.500 4v5" stroke="#ddd"/><path d="M8 1h7v8H8z" fill="#6d6e71" stroke="#555"/><path d="M9.500 4l2 3 3.500-6" stroke="#fff" stroke-width="1.500" fill="none"/></svg>' : '';
        return `<div class="prop d-flex"><div style="width:66px"><div class="lab d-flex">${check}<span data-w="${w}">${name}</span></div><div class="trk"><div style="width:${fill}px"></div></div></div>
            <div class="val"><span data-w="${val.length === 3 ? 10 : 8}">${val}</span></div><svg width="6" height="10" style="margin:4px 2px 0 3px"><use href="#spin"/></svg>
            ${btn ? '<div class="down-btn" style="margin-top:3px"><svg width="7" height="9"><path d="M2.500 1h2v3h1.500L3.500 6.500 1 4h1.500zM1 7.500h5" fill="#eee" stroke="#eee" stroke-width=".7"/></svg></div>' : ''}</div>${sep ? '<div class="grp"></div>' : ''}`;
    }).join('');

    const sizes = [[.7, .5], [1, .5], [1.5, .5], [2, .5], [2.5, .7], [3, .8], [4, 1], [5, 1.3], [6, 1.6], [7, 1.8], [8, 2.1], [10, 2.8], [12, 3.5], [15, 4.3], [17, 5], [20, 6], [25, 7.4], [30, 7.6], [40, 7.6], [50, 7.6], [60, 7.6], [70, 7.6], [80, 7.6], [100, 7.6]];
    $('sizes').innerHTML = sizes.map(([n, r]) =>
        `<div class="${n === 5 ? 'on' : ''}"><svg width="19" height="17"><circle cx="9.500" cy="7.500" r="${r}"/></svg><span class="num">${n}</span></div>`).join('');

    $('channels').innerHTML = [['R', 'g-r', 190], ['G', 'g-g', 190], ['B', 'g-b', 220]].map(([c, cls, v]) =>
        `<div class="d-flex" style="height:15.600px;padding:6px 0 0 3px"><span style="width:9px;margin-top:-1px">${c}</span><div><div class="grad ${cls}"></div><svg width="69" height="5"><path d="M${v * .27 - 3} 4.500h7l-3.500-4z" fill="#626366" stroke="#4a4a4c" stroke-width=".5"/></svg></div><span data-w="11.500" style="margin:-1px 0 0 4px">${v}</span><svg width="6" height="10" style="margin:-2px 0 0 8px"><use href="#spin"/></svg></div>`).join('');

    // コマンドバー
    const cmd = {
        new: '<path d="M4 2h5l4 4v8H4z" fill="#fff" stroke="#222"/><path d="M9 2v4h4M1 3h3M2.500 1v4" fill="none" stroke="#222"/>',
        open: '<path d="M2 5h4l1 2h6v7H2z" fill="#eee" stroke="#222"/><path d="M2 14l3-5h10l-3 5zM8 4h4V2l3 2.500L12 6z" fill="#ccc" stroke="#222" stroke-width=".8"/>',
        save: '<path d="M3 2h10v9H3z" fill="#8c8c8c" stroke="#555"/><path d="M3 12.500h11" stroke="#555" stroke-width="2"/>',
        undo: '<path d="M6 3L3 6l3 3M3 6h7c4 0 4 6 0 6H4" fill="none" stroke="#5b5c5f" stroke-width="1.500"/>',
        redo: '<path d="M10 3l3 3-3 3M13 6H6c-4 0-4 6 0 6h3" fill="none" stroke="#626366" stroke-width="1.500"/>',
        dots: '<circle cx="8" cy="8" r="5" fill="none" stroke="#222" stroke-width="3" stroke-dasharray="2 1.927"/>',
        ball: '<circle cx="8" cy="8" r="4" fill="#aaa"/><circle cx="8" cy="8" r="6" fill="none" stroke="#58595c" stroke-width="1.500" stroke-dasharray="2 1.500"/>',
        bucket: '<use href="#bucket" width="16" height="16"/>',
        scale: '<path d="M4.500 4.500h7v7h-7z" fill="#777" stroke="#222" stroke-width="1.500"/><path d="M1 1l4 4M15 1l-4 4M1 15l4-4M15 15l-4-4M1 4V1h3M12 1h3v3M1 12v3h3M12 15h3v-3" stroke="#222" fill="none" stroke-width="1.500"/>',
        d1: '<path d="M3 3h10v10H3zM1 15L15 1" fill="none" stroke="#626366"/>',
        d2: '<path d="M2.500 2.500h11v11h-11z" fill="none" stroke="#626366"/><path d="M2.500 13.500l11-11v11z" fill="#68696c"/>',
        d3: '<path d="M5 5h6v6H5z" fill="#aaa"/><path d="M3 3h10v10H3z" fill="none" stroke="#58595c" stroke-dasharray="1 1"/>',
        s1: '<path d="M2 5v9h11" stroke="#27699a" fill="none"/><path d="M2 4l10 8" stroke="#111" fill="none" stroke-width="1.500"/><path d="M10.500 2h3v8l-1.500 3-1.500-3z" fill="#bbb" stroke="#222" stroke-width=".8"/>',
        s2: '<path d="M1 14h12M1 10l4-3" stroke="#27699a" fill="none"/><path d="M10 7C6 7 3 9 3 13h8" fill="none" stroke="#222" stroke-width="1.500"/><path d="M10 2h3v8l-1.500 3L10 10z" fill="#bbb" stroke="#222" stroke-width=".8"/>',
        s3: '<path d="M2 4h12M2 9h12M2 13h12M4 2v12M12 2v12" stroke="#4585b0" stroke-width=".8"/><path d="M6.500 1h4v10l-2 3-2-3z" fill="#222" stroke="#14507a"/>'
    };
    const icon = k => `<svg class="ic" viewBox="-.5 -.5 17 17" ${k === 's2' ? 'style="background:#636467"' : ''}>${cmd[k]}</svg>`;
    const sep = '<div class="gap5"></div>';
    $('cmdbar').innerHTML = '<div class="whitebox"><svg width="24" height="13"><path d="M17 8c-3 4-10 4-10-.500C7 2 17 1 17 5.500c0 4-7 4.500-7 1.500 0-2 4-3 4-.500" fill="none" stroke="#333" stroke-width="1.200"/></svg></div>' + sep
        + ['new', 'open', 'save'].map(icon).join('') + '<svg width="9" height="6"><path d="M1 1h6L4 5z" fill="#333"/></svg>' + sep
        + ['undo', 'redo'].map(icon).join('') + sep + ['dots', 'ball', 'bucket', 'scale'].map(icon).join('') + sep
        + ['d1', 'd2', 'd3'].map(icon).join('') + sep + ['s1', 's2', 's3'].map(icon).join('') + sep
        + '<div class="whitebox"><svg width="24" height="13"><ellipse cx="12" cy="6" rx="5" ry="4.500" fill="#333"/><path d="M10 9l1 3 2-2z" fill="#333"/><text x="9.800" y="9" font-size="8" font-weight="bold" fill="#fff">?</text></svg></div>';

    // 素材パレットのボタン
    const cross = (c, s) => `<path d="M11 11l8 8M19 11l-8 8" stroke="${s}" stroke-width="4.500"/><path d="M11 11l8 8M19 11l-8 8" stroke="${c}" stroke-width="2.500"/><path d="M14 14h2v2h-2z" fill="${s}"/>`;
    const mats = [
        cross('#e8fff4', '#3aa89a'), '<path d="M9 10h9v9H9z" fill="#fff" stroke="#222"/><path d="M11 16l2-3h2l2 3z" fill="#444"/>', cross('#ccc', '#444'),
        '<path d="M8 10h10v10H8z" fill="url(#chk)"/>', '<path d="M10 9h8v10h-8z" fill="#fff" stroke="#222"/><path d="M10 12h8M14 9v3M10 15h8M13 12v7" stroke="#555"/>',
        '<path d="M10 11l3 3M18 11l-3 3M10 19l3-3M18 19l-3-3" stroke="#222" stroke-width="2" stroke-dasharray="1.500 1"/>',
        '<path d="M9 10h9v8H9z" fill="#ddd" stroke="#222"/><path d="M10 17v-3l3-2 2 3 2-1v3z" fill="#111"/>', '<path d="M9 11h9v7H9z" fill="#555" stroke="#222"/><path d="M10 17l7-5" stroke="#ccc" stroke-width="1.500"/>',
        '<path d="M9 12l5-2 4 2v6l-4 2-5-2z" fill="#fff" stroke="#333"/><path d="M9 12l5 2 4-2M14 14v6" fill="none" stroke="#777"/>', cross('#bbb', '#333')
    ];
    $('materials').innerHTML = '<div class="qbtn"><svg width="19" height="22"><circle cx="9.500" cy="10.500" r="7" fill="#999" stroke="#333" stroke-width="2.300"/><path d="M9 10h5l-2 2 5 5-2 2-5-5-1 2z" fill="#222"/></svg></div>'
        + mats.map(m => `<div class="qbtn"><svg width="19" height="22" viewBox="0 0 20 23"><use href="#folder" width="21" height="24"/>${m}</svg></div>`).join('');

    // 定規 (60px ごとに目盛り、数字は 1 桁 5.3px)
    const step = 37.33;
    const digits = n => `textLength="${String(n).length * 5.3 - (n === 1260 ? 5.5 : .8)}"`;
    let h = '', v = '';
    for (let i = -1; i < 22; i++) {
        const x = 16 + i * step;
        h += `<path d="M${x} 0v8" stroke="#777" stroke-width=".8"/>` + (i >= 0 ? `<text x="${x + 1.5}" y="7" ${digits(i * 60)} lengthAdjust="${i === 21 ? 'spacingAndGlyphs' : 'spacing'}">${i * 60}</text>` : '');
        for (let k = 1; k < 10; k++) h += `<path d="M${x + k * step / 10} ${k === 5 ? 5 : 6.5}V8" stroke="#777" stroke-width=".8"/>`;
    }
    for (let i = -1; i < 14; i++) {
        const y = 49 + i * step;
        const n = i === 13 ? 80 : Math.abs(i * 60);
        v += `<path d="M0 ${y}h9" stroke="#777" stroke-width=".8"/><text transform="translate(7.500 ${y + 1}) rotate(-90)" text-anchor="end" textLength="${String(n).length * 5.2 - 1.2}">${n}</text>`;
        for (let k = 1; k < 10; k++) v += `<path d="M${k === 5 ? 6 : 7.5} ${y + k * step / 10}H9" stroke="#777" stroke-width=".8"/>`;
    }
    $('hruler').innerHTML = h + '<path d="M0 0h9v8H0z" fill="#fff"/><path d="M0 5h9M7 0v8" stroke="#888" stroke-width=".7"/>';
    $('vruler').innerHTML = v;

    // 文字を data-w の幅に合わせて長体にする
    document.querySelectorAll('[data-w]').forEach(el => {
        const inner = document.createElement('span');
        inner.className = 'fit-in';
        inner.textContent = el.textContent;
        el.replaceChildren(inner);
        const w = inner.getBoundingClientRect().width;
        el.style.width = el.dataset.w + 'px';
        el.style.textAlign = 'left';
        inner.style.transform = `scaleX(${el.dataset.w / w})`;
    });
</script>
<script src="https://cdn.jsdelivr.net/npm/bootstrap@5.3.0/dist/js/bootstrap.bundle.min.js"></script>
</body>
</html>
